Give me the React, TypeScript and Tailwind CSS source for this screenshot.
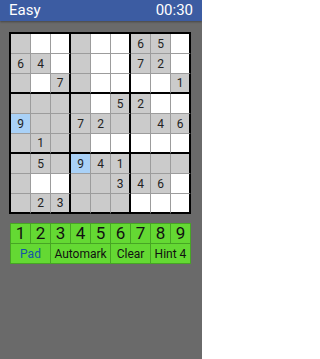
import clsx from "clsx";

// g = given/gray, w = white, b = selected blue
const board: string[][] = [
  ["g", "w", "w", "g", "w", "w", "g6", "g5", "w"],
  ["g6", "g4", "w", "g", "w", "w", "g7", "g2", "w"],
  ["g", "w", "g7", "g", "w", "w", "w", "w", "g1"],
  ["g", "g", "g", "g", "w", "g5", "g2", "w", "w"],
  ["b9", "g", "g", "g7", "g2", "g", "g", "g4", "g6"],
  ["g", "g1", "g", "g", "w", "w", "w", "w", "w"],
  ["g", "g5", "g", "b9", "g4", "g1", "g", "g", "g"],
  ["g", "w", "w", "g", "g", "g3", "g4", "g6", "w"],
  ["g", "g2", "g3", "g", "g", "g", "w", "w", "w"],
];

const Cell = ({ code, row, col }: { code: string; row: number; col: number }) => {
  const kind = code[0];
  const value = code.slice(1);
  const thickRight = col % 3 === 2;
  const thickBottom = row % 3 === 2;
  return (
    <div
      className={clsx(
        "h-[20px] w-[20px] box-border flex items-center justify-center text-[12px] leading-none text-[#222]",
        kind === "g" && "bg-[#cbcbcb]",
        kind === "w" && "bg-white",
        kind === "b" && "bg-[#a9d1f7]",
        thickRight ? "border-r-2 border-r-black" : "border-r border-r-[#9c9c9c]",
        thickBottom ? "border-b-2 border-b-black" : "border-b border-b-[#9c9c9c]"
      )}
    >
      {value}
    </div>
  );
};

export default function App() {
  return (
    <div className="w-[202px] h-[359px] bg-[#6a6a6a] overflow-hidden font-['Roboto',sans-serif]">
      {/* Title bar */}
      <div className="h-[21px] bg-[#3c5ca2] flex items-center justify-between pl-[9px] pr-[9px] text-white text-[15px] leading-none shadow-[0_1px_2px_rgba(0,0,0,0.35)]">
        <span>Easy</span>
        <span>00:30</span>
      </div>

      {/* Board */}
      <div className="mt-[11px] ml-[9px] w-[182px] border-l-2 border-t-2 border-black grid grid-cols-9">
        {board.map((r, ri) =>
          r.map((code, ci) => <Cell key={`${ri}-${ci}`} code={code} row={ri} col={ci} />)
        )}
      </div>

      {/* Number pad */}
      <div className="mt-[9px] ml-[10px] w-[181px] bg-[#47a524] p-px grid grid-cols-9 gap-px">
        {[1, 2, 3, 4, 5, 6, 7, 8, 9].map(n => (
          <button key={n} className="h-[19px] bg-[#64d933] flex items-center justify-center text-[17px] leading-none text-[#111]">
            {n}
          </button>
        ))}
        <button className="col-span-2 h-[19px] bg-[#64d933] flex items-center justify-center text-[12px] leading-none text-[#1554a8]">Pad</button>
        <button className="col-span-3 h-[19px] bg-[#64d933] flex items-center justify-center text-[12px] leading-none text-[#111]">Automark</button>
        <button className="col-span-2 h-[19px] bg-[#64d933] flex items-center justify-center text-[12px] leading-none text-[#111]">Clear</button>
        <button className="col-span-2 h-[19px] bg-[#64d933] flex items-center justify-center text-[12px] leading-none text-[#111]">Hint 4</button>
      </div>
    </div>
  );
}
